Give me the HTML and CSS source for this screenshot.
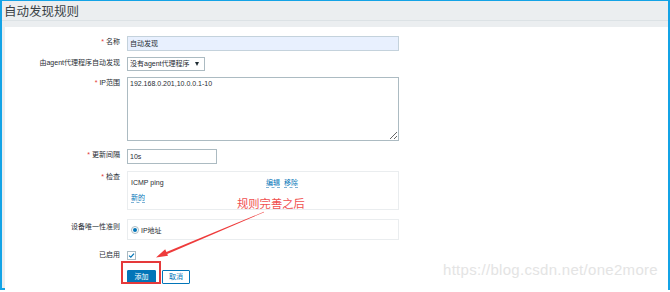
FILE: index.html
```html
<!DOCTYPE html>
<html lang="zh-CN">
<head>
    <meta charset="UTF-8">
    <meta name="viewport" content="width=device-width, initial-scale=1.0">
    <title>自动发现规则</title>
    <link rel="stylesheet" href="styles.css">
</head>
<body>
    <div class="frame">
        <div class="header">
            <h1>自动发现规则</h1>
        </div>
        <div class="page">
            <div class="panel">
                <div class="form-list">
                    <div class="form-row row-name">
                        <label class="form-label"><span class="req">*</span> 名称</label>
                        <div class="form-field">
                            <div class="input input-wide input-filled">自动发现</div>
                        </div>
                    </div>
                    <div class="form-row row-proxy">
                        <label class="form-label">由agent代理程序自动发现</label>
                        <div class="form-field">
                            <div class="select">没有agent代理程序</div>
                        </div>
                    </div>
                    <div class="form-row row-range">
                        <label class="form-label"><span class="req">*</span> IP范围</label>
                        <div class="form-field">
                            <textarea class="textarea" readonly>192.168.0.201,10.0.0.1-10</textarea>
                        </div>
                    </div>
                    <div class="form-row row-delay">
                        <label class="form-label"><span class="req">*</span> 更新间隔</label>
                        <div class="form-field">
                            <div class="input input-short">10s</div>
                        </div>
                    </div>
                    <div class="form-row row-checks">
                        <label class="form-label"><span class="req">*</span> 检查</label>
                        <div class="form-field">
                            <div class="box check-list">
                                <div class="check-item">
                                    <span class="check-name">ICMP ping</span>
                                    <span class="actions">
                                        <a class="link">编辑</a>
                                        <a class="link">移除</a>
                                    </span>
                                </div>
                                <div class="check-item">
                                    <a class="link">新的</a>
                                </div>
                            </div>
                        </div>
                    </div>
                    <div class="form-row row-unique">
                        <label class="form-label">设备唯一性准则</label>
                        <div class="form-field">
                            <div class="box radio-list">
                                <span class="radio"></span>
                                <span>IP地址</span>
                            </div>
                        </div>
                    </div>
                    <div class="form-row row-status">
                        <label class="form-label">已启用</label>
                        <div class="form-field">
                            <span class="checkbox">
                                <svg width="7" height="7" viewBox="0 0 7 7"><path d="M1 3.6 L2.8 5.2 L6 1.6" fill="none" stroke="#0275b8" stroke-width="1.2"/></svg>
                            </span>
                        </div>
                    </div>
                    <div class="form-row row-buttons">
                        <div class="form-label"></div>
                        <div class="form-field buttons">
                            <button class="btn btn-primary">添加</button>
                            <button class="btn btn-alt">取消</button>
                        </div>
                    </div>
                </div>

                <!-- screenshot annotations -->
                <div class="note">规则完善之后</div>
                <div class="highlight"></div>
                <svg class="arrow" width="660" height="260" viewBox="0 0 660 260">
                    <g transform="translate(-5,-30)">
                        <polygon points="264.1,215.2 263.9,214.8 165.8,255.2 166.7,257.2" fill="#ee3b3b"/>
                        <polygon points="156,260.5 168,258.8 165.2,252.2" fill="#ee3b3b"/>
                    </g>
                </svg>
                <div class="watermark">https://blog.csdn.net/one2more</div>
            </div>
        </div>
    </div>
</body>
</html>
```

FILE: styles.css
```css
body {
    margin: 0;
    font-family: "Liberation Sans", Arial, "Noto Sans CJK SC", sans-serif;
    font-size: 7px;
    color: #1f2c33;
    background: #fff;
}
.frame {
    position: relative;
    box-sizing: border-box;
    width: 670px;
    height: 290px;
    border: 2px solid #13a3e6;
    border-top-width: 1px;
    background: #ebeef0;
    display: flex;
    flex-direction: column;
}
.header {
    height: 22px;
    padding-left: 2px;
    border-bottom: 1px solid #dce2e5;
    display: flex;
    align-items: center;
}
.header h1 {
    margin: 0;
    font-size: 12.5px;
    font-weight: normal;
    color: #3a4247;
    font-family: "Noto Sans CJK SC", sans-serif;
}
.page {
    flex: 1;
    padding: 6px 0 0 3px;
    display: flex;
}
.panel {
    position: relative;
    flex: 1;
    background: #fff;
    padding-top: 9px;
}
.form-row {
    display: flex;
    align-items: flex-start;
    margin-bottom: 6px;
}
.row-range { margin-bottom: 8px; }
.row-delay { margin-bottom: 7px; }
.row-checks, .row-unique, .row-status { margin-bottom: 9px; }
.row-status { align-items: center; }
.form-label {
    width: 115px;
    margin-right: 7px;
    text-align: right;
    line-height: 12px;
    white-space: nowrap;
}
.row-unique .form-label { padding-top: 2px; }
.req {
    color: #e33734;
}
.input, .select {
    box-sizing: border-box;
    height: 15px;
    border: 1px solid #acbbc2;
    padding: 0 2px;
    line-height: 13px;
    background: #fff;
}
.input-wide { width: 272px; }
.input-filled {
    background: #e8f0fe;
    border-color: #c4d2dc;
}
.input-short { width: 90px; }
.select {
    position: relative;
    width: 78px;
    height: 14px;
    line-height: 12px;
}
.select::after {
    content: "";
    position: absolute;
    right: 5px;
    top: 4px;
    border-left: 2.5px solid transparent;
    border-right: 2.5px solid transparent;
    border-top: 4px solid #1f2c33;
}
.textarea {
    display: block;
    box-sizing: border-box;
    width: 272px;
    height: 64px;
    margin: 0;
    padding: 0 2px;
    border: 1px solid #acbbc2;
    border-radius: 0;
    font: inherit;
    line-height: 11px;
    color: #1f2c33;
    resize: vertical;
    outline: none;
}
.box {
    box-sizing: border-box;
    width: 272px;
    border: 1px solid #eaedef;
}
.check-list {
    height: 39px;
    padding: 5px 3px;
}
.check-item {
    display: flex;
    line-height: 12px;
    margin-bottom: 4px;
}
.check-name {
    width: 135px;
}
.actions {
    display: flex;
    gap: 4px;
}
.link {
    color: #0275b8;
    text-decoration: none;
    border-bottom: 1px dashed #7fb2d6;
    line-height: 9px;
    align-self: center;
}
.radio-list {
    height: 21px;
    padding-left: 3px;
    display: flex;
    align-items: center;
    gap: 2px;
}
.radio {
    box-sizing: border-box;
    width: 8px;
    height: 8px;
    border: 1px solid #acbbc2;
    border-radius: 50%;
    display: flex;
    align-items: center;
    justify-content: center;
}
.radio::after {
    content: "";
    width: 4px;
    height: 4px;
    border-radius: 50%;
    background: #0275b8;
}
.checkbox {
    box-sizing: border-box;
    width: 9px;
    height: 9px;
    border: 1px solid #acbbc2;
    display: flex;
    align-items: center;
    justify-content: center;
}
.buttons {
    display: flex;
    gap: 6px;
}
.btn {
    box-sizing: border-box;
    height: 14px;
    padding: 0;
    font: inherit;
    border: 1px solid #0275b8;
    border-radius: 1px;
    line-height: 12px;
}
.btn-primary {
    width: 29px;
    background: #0275b8;
    color: #fff;
}
.btn-alt {
    width: 28px;
    background: #fff;
    color: #0275b8;
}
.note {
    position: absolute;
    left: 232px;
    top: 170px;
    font-family: "Noto Sans CJK SC", sans-serif;
    font-size: 11.3px;
    line-height: 12px;
    color: #f0504f;
}
.highlight {
    position: absolute;
    box-sizing: border-box;
    left: 116px;
    top: 234px;
    width: 40px;
    height: 23px;
    border: 2px solid #e5393a;
}
.arrow {
    position: absolute;
    left: 0;
    top: 0;
}
.watermark {
    position: absolute;
    left: 438px;
    top: 235px;
    font-size: 15px;
    line-height: 15px;
    letter-spacing: 0.3px;
    color: #e4e4e4;
}
```
